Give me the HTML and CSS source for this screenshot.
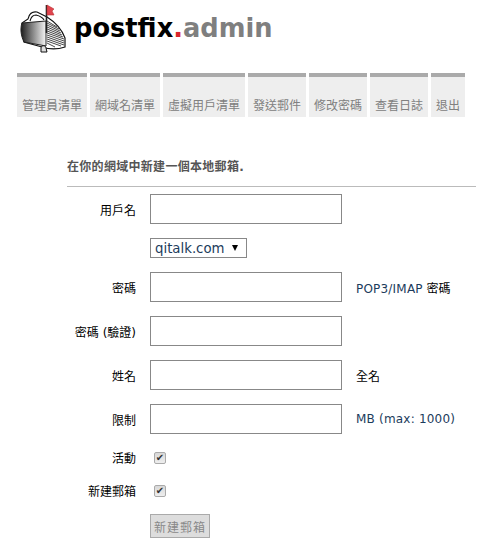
FILE: index.html
```html
<!DOCTYPE html>
<html lang="zh-Hant">
<head>
    <meta charset="UTF-8">
    <meta name="viewport" content="width=device-width, initial-scale=1.0">
    <title>Postfix Admin</title>
    <link rel="stylesheet" href="styles.css">
</head>
<body>
    <div class="logo">
        <svg class="logo-icon" width="52" height="54" viewBox="17 0 52 54">
            <defs>
                <linearGradient id="door" x1="0" x2="1" y1="0" y2="0">
                    <stop offset="0" stop-color="#1c1c1c"/>
                    <stop offset="0.4" stop-color="#777"/>
                    <stop offset="1" stop-color="#f6f6f6"/>
                </linearGradient>
            </defs>
            <path d="M28 19 C29 14 32 11 37 12 L47 17 C55 22 62 30 65 38 L65 47 C56 50 48 49 42 47 L24 42 L22 23 Z" fill="#fff" stroke="#111" stroke-width="1.2"/>
            <path d="M22 23 L46 21 L46 46 L24 42 C21 36 20 29 22 23 Z" fill="url(#door)" stroke="#222" stroke-width="1"/>
            <path d="M47 21 L57 27 M47 23 L59 29 M47 25 L60 31 M47 27 L61 33 M47 29 L62 35 M47 31 L63 37 M47 33 L64 39 M47 35 L64 41 M47 37 L64 43 M47 39 L64 45 M47 41 L61 46 M47 43 L55 47" stroke="#333" stroke-width="0.9" fill="none"/>
            <path d="M30 21 C31 17 33 15 36 15 C40 16 43 18 44 20" stroke="#111" stroke-width="1.1" fill="none"/>
            <path d="M46.500 5 L46.500 33" stroke="#222" stroke-width="1.6"/>
            <path d="M47 5 L54 9 L52 11 L54 15 L47 15 Z" fill="#e0454f" stroke="#b33" stroke-width="0.6"/>
            <path d="M41 52 L41 48 C41 45 46 45 46 48 L47 52 Z" fill="#ddd" stroke="#111" stroke-width="1"/>
        </svg>
        <span class="logo-text">postfix<span class="logo-dot">.</span><span class="logo-admin">admin</span></span>
    </div>

    <ul class="menu">
        <li><a href="#">管理員清單</a></li>
        <li><a href="#">網域名清單</a></li>
        <li><a href="#">虛擬用戶清單</a></li>
        <li><a href="#">發送郵件</a></li>
        <li><a href="#">修改密碼</a></li>
        <li><a href="#">查看日誌</a></li>
        <li><a href="#">退出</a></li>
    </ul>

    <form class="form">
        <h3 class="form-title">在你的網域中新建一個本地郵箱.</h3>
        <div class="row">
            <label class="row-label">用戶名</label>
            <input class="text-input" type="text">
        </div>
        <div class="row row-select">
            <span class="row-label"></span>
            <span class="select-wrap">
                <select class="domain-select"><option>qitalk.com</option></select>
            </span>
        </div>
        <div class="row">
            <label class="row-label">密碼</label>
            <input class="text-input" type="password">
            <span class="hint"><span class="hint-en">POP3/IMAP</span> 密碼</span>
        </div>
        <div class="row">
            <label class="row-label">密碼 (驗證)</label>
            <input class="text-input" type="password">
        </div>
        <div class="row">
            <label class="row-label">姓名</label>
            <input class="text-input" type="text">
            <span class="hint">全名</span>
        </div>
        <div class="row">
            <label class="row-label">限制</label>
            <input class="text-input" type="text">
            <span class="hint"><span class="hint-en">MB (max: 1000)</span></span>
        </div>
        <div class="row row-check">
            <label class="row-label">活動</label>
            <input class="check" type="checkbox" checked>
        </div>
        <div class="row row-check">
            <label class="row-label">新建郵箱</label>
            <input class="check" type="checkbox" checked>
        </div>
        <div class="row row-submit">
            <span class="row-label"></span>
            <button class="submit" type="button">新建郵箱</button>
        </div>
    </form>
</body>
</html>
```

FILE: styles.css
```css
body {
    margin: 0;
    padding: 0;
    background: #fff;
    color: #000;
    font-family: "DejaVu Sans", "Noto Sans CJK TC", sans-serif;
    font-size: 12px;
}

.logo {
    display: flex;
    align-items: flex-start;
    height: 58px;
    padding-left: 17px;
}
.logo-icon {
    flex: none;
}
.logo-text {
    margin: 13px 0 0 5px;
    font-size: 25.7px;
    font-weight: bold;
    line-height: 30px;
}
.logo-dot {
    color: #d9262c;
}
.logo-admin {
    color: #7f7f7f;
}

.menu {
    display: flex;
    gap: 3px;
    list-style: none;
    margin: 15px 0 0 17px;
    padding: 0;
}
.menu a {
    display: block;
    height: 24px;
    padding: 16px 5px 0;
    border-top: 4px solid #aaa;
    background: #eee;
    color: #808080;
    font-family: "Noto Sans CJK TC", sans-serif;
    font-size: 12px;
    line-height: 24px;
    text-decoration: none;
}

.form {
    margin: 39px 15px 0 67px;
}
.form-title {
    margin: 0 0 7px;
    padding: 3px 0 11px;
    border-bottom: 1px solid #bbb;
    color: #555;
    font-size: 12px;
    font-weight: bold;
    letter-spacing: 0.3px;
    line-height: 16px;
}

.row {
    display: flex;
    align-items: center;
    height: 30px;
    margin-bottom: 14px;
}
.row-label {
    flex: none;
    width: 69px;
    margin-right: 14px;
    text-align: right;
}
.text-input {
    box-sizing: border-box;
    width: 192px;
    height: 30px;
    padding: 2px 4px;
    border: 1px solid #888;
    background: #fff;
}
.hint {
    margin-left: 14px;
    font-size: 12px;
    white-space: nowrap;
}
.hint-en {
    color: #1c3c5c;
    letter-spacing: 0.2px;
}

.row-select {
    height: 20px;
}
.select-wrap {
    position: relative;
    display: block;
    width: 97px;
    height: 20px;
}
.select-wrap::after {
    content: "";
    position: absolute;
    right: 9px;
    top: 7px;
    border-top: 6px solid #000;
    border-left: 3.5px solid transparent;
    border-right: 3.5px solid transparent;
}
.domain-select {
    appearance: none;
    box-sizing: border-box;
    display: block;
    width: 97px;
    height: 20px;
    padding: 0 4px;
    border: 1px solid #888;
    border-radius: 0;
    background: #fff;
    color: #1c3c5c;
    font-family: "DejaVu Sans", sans-serif;
    font-size: 13.3px;
}

.row-check {
    height: 13px;
    padding-top: 3px;
    margin-bottom: 17px;
}
.check {
    appearance: none;
    box-sizing: border-box;
    position: relative;
    width: 12px;
    height: 12px;
    margin: 0 0 0 4px;
    border: 1px solid #aaa;
    border-radius: 2px;
    background: linear-gradient(#d8d8d8, #eee);
}
.check:checked::after {
    content: "✔";
    position: absolute;
    left: 0;
    top: 0;
    width: 10px;
    color: #333;
    font-family: "DejaVu Sans", sans-serif;
    font-size: 10px;
    line-height: 10px;
    text-align: center;
}

.row-submit {
    height: 24px;
    margin-bottom: 0;
}
.submit {
    box-sizing: border-box;
    width: 60px;
    height: 24px;
    padding: 0;
    border: 1px solid #aaa;
    background: #ddd;
    color: #888;
    font-family: "Noto Sans CJK TC", sans-serif;
    font-size: 12px;
    letter-spacing: 1px;
}
```
